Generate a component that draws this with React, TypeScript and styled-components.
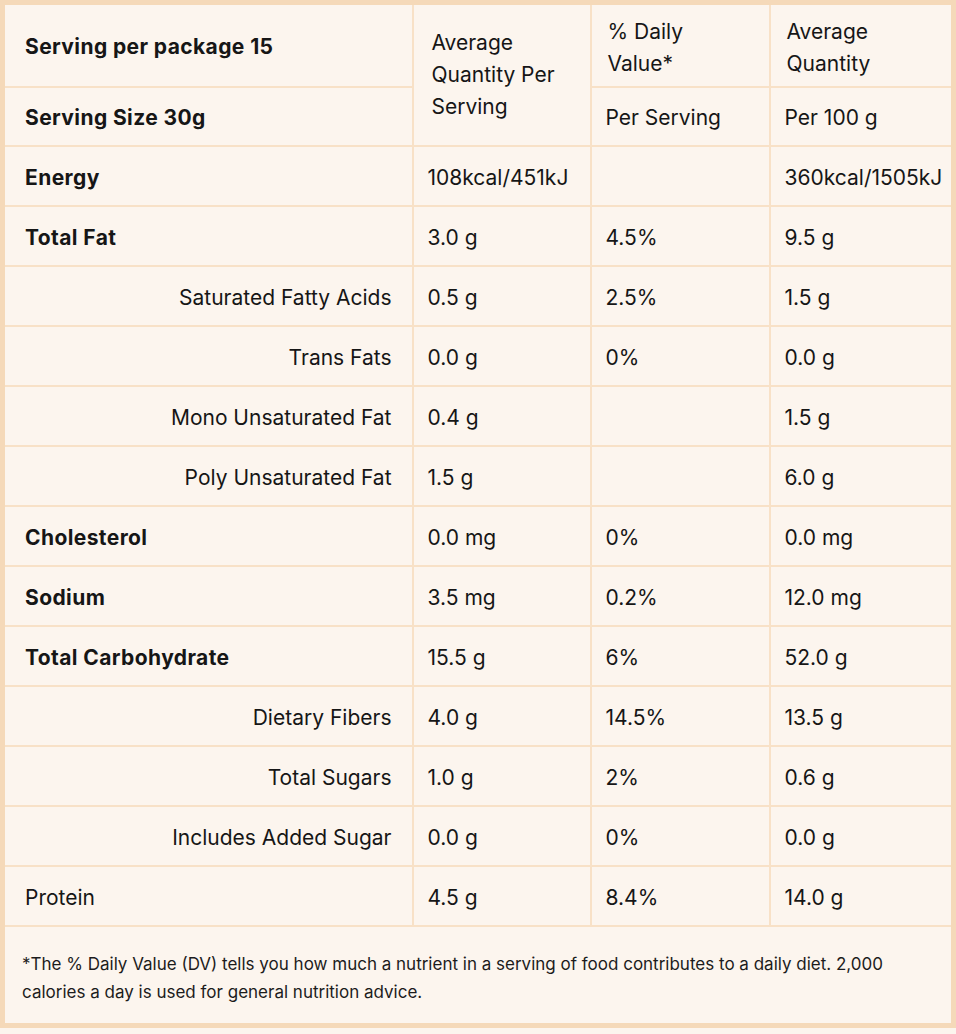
import styled, { createGlobalStyle } from 'styled-components';

const GlobalStyle = createGlobalStyle`
  html, body {
    margin: 0;
    padding: 0;
    background: #fcf5ee;
  }
  body {
    font-family: Inter, "Noto Sans", sans-serif;
    color: #161616;
  }
`;

const Table = styled.table`
  width: 956px;
  border-collapse: collapse;
  table-layout: fixed;
  background: #fcf5ee;
  border: 5px solid #f5d9b9;
`;

const Cell = styled.td<{ $bold?: boolean; $right?: boolean }>`
  border: 2px solid #f8e1c7;
  padding: 4px 14px 0 14px;
  font-size: 21px;
  line-height: 32px;
  font-weight: ${(p) => (p.$bold ? 700 : 400)};
  letter-spacing: ${(p) => (p.$bold ? '0.4px' : '0')};
  text-align: ${(p) => (p.$right ? 'right' : 'left')};
  vertical-align: middle;
  white-space: nowrap;
`;

const LabelCell = styled(Cell)`
  padding: 4px 20px 0 20px;
`;

const HeadCell = styled(Cell)`
  padding-top: 6px;
  padding-left: 16px;
`;

const Row = styled.tr<{ $h: number }>`
  height: ${(p) => p.$h}px;
`;

const FootCell = styled.td`
  border: 2px solid #f8e1c7;
  padding: 6px 17px 0;
  font-size: 17px;
  line-height: 28px;
  color: #1c1c1c;
`;

type Item = {
  name: string;
  bold?: boolean;
  sub?: boolean;
  qty: string;
  dv: string;
  per100: string;
};

const items: Item[] = [
  { name: 'Energy', bold: true, qty: '108kcal/451kJ', dv: '', per100: '360kcal/1505kJ' },
  { name: 'Total Fat', bold: true, qty: '3.0 g', dv: '4.5%', per100: '9.5 g' },
  { name: 'Saturated Fatty Acids', sub: true, qty: '0.5 g', dv: '2.5%', per100: '1.5 g' },
  { name: 'Trans Fats', sub: true, qty: '0.0 g', dv: '0%', per100: '0.0 g' },
  { name: 'Mono Unsaturated Fat', sub: true, qty: '0.4 g', dv: '', per100: '1.5 g' },
  { name: 'Poly Unsaturated Fat', sub: true, qty: '1.5 g', dv: '', per100: '6.0 g' },
  { name: 'Cholesterol', bold: true, qty: '0.0 mg', dv: '0%', per100: '0.0 mg' },
  { name: 'Sodium', bold: true, qty: '3.5 mg', dv: '0.2%', per100: '12.0 mg' },
  { name: 'Total Carbohydrate', bold: true, qty: '15.5 g', dv: '6%', per100: '52.0 g' },
  { name: 'Dietary Fibers', sub: true, qty: '4.0 g', dv: '14.5%', per100: '13.5 g' },
  { name: 'Total Sugars', sub: true, qty: '1.0 g', dv: '2%', per100: '0.6 g' },
  { name: 'Includes Added Sugar', sub: true, qty: '0.0 g', dv: '0%', per100: '0.0 g' },
  { name: 'Protein', qty: '4.5 g', dv: '8.4%', per100: '14.0 g' },
];

export default function App() {
  return (
    <>
      <GlobalStyle />
      <Table>
        <colgroup>
          <col style={{ width: 410 }} />
          <col style={{ width: 178 }} />
          <col style={{ width: 179 }} />
          <col />
        </colgroup>
        <tbody>
          <Row $h={84}>
            <LabelCell $bold>Serving per package 15</LabelCell>
            <HeadCell rowSpan={2} style={{ paddingLeft: 18, paddingTop: 0 }}>
              Average
              <br />
              Quantity Per
              <br />
              Serving
            </HeadCell>
            <HeadCell>
              % Daily
              <br />
              Value*
            </HeadCell>
            <HeadCell>
              Average
              <br />
              Quantity
            </HeadCell>
          </Row>
          <Row $h={59}>
            <LabelCell $bold>Serving Size 30g</LabelCell>
            <Cell>Per Serving</Cell>
            <Cell>Per 100 g</Cell>
          </Row>
          {items.map((it) => (
            <Row $h={60} key={it.name}>
              <LabelCell $bold={it.bold} $right={it.sub}>
                {it.name}
              </LabelCell>
              <Cell>{it.qty}</Cell>
              <Cell>{it.dv}</Cell>
              <Cell>{it.per100}</Cell>
            </Row>
          ))}
          <Row $h={100}>
            <FootCell colSpan={4}>
              *The % Daily Value (DV) tells you how much a nutrient in a serving of food contributes to a
              daily diet. 2,000 calories a day is used for general nutrition advice.
            </FootCell>
          </Row>
        </tbody>
      </Table>
    </>
  );
}
